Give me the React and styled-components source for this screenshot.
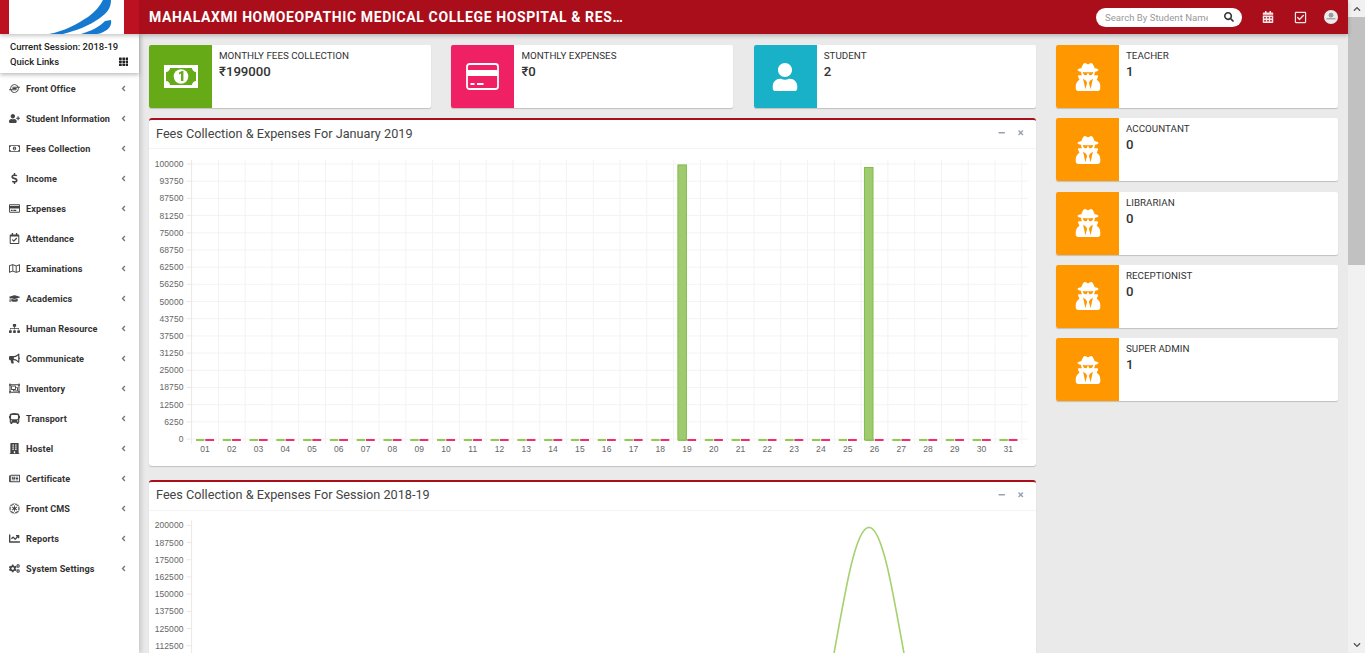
import React from "react"
import styled, { createGlobalStyle } from "styled-components"
import {
  FaAngleLeft,
  FaBuilding,
  FaBullhorn,
  FaBus,
  FaCalendarAlt,
  FaChartLine,
  FaChevronDown,
  FaChevronUp,
  FaCogs,
  FaDollarSign,
  FaEmpire,
  FaGraduationCap,
  FaIoxhost,
  FaMinus,
  FaRegCalendarCheck,
  FaRegCheckSquare,
  FaRegCreditCard,
  FaRegMap,
  FaRegMoneyBillAlt,
  FaRegNewspaper,
  FaRegObjectGroup,
  FaSearch,
  FaSitemap,
  FaTh,
  FaTimes,
  FaUser,
  FaUserPlus,
  FaUserSecret,
} from "react-icons/fa"

const RED = "#a90e1a"

const GlobalStyle = createGlobalStyle`
  html, body {
    margin: 0;
    height: 100%;
    overflow: hidden;
    background: #eaeaea;
    font-family: Roboto, "Noto Sans", Arial, sans-serif;
    color: #333;
  }
  * {
    box-sizing: border-box;
  }
`

const Page = styled.div`
  display: flex;
  width: 100vw;
  height: 100vh;
  overflow: hidden;
`

const Main = styled.div`
  flex: 1;
  min-width: 0;
  display: flex;
  flex-direction: column;
`

const Header = styled.header`
  position: relative;
  z-index: 3;
  display: flex;
  align-items: center;
  flex: none;
  height: 34px;
  background: ${RED};
  box-shadow: 0 2px 4px rgba(0, 0, 0, 0.22);
`

const LogoArea = styled.div`
  flex: none;
  width: 139px;
  height: 34px;
  padding: 0 15px 0 9px;
  background: #bb1121;
`

const LogoBox = styled.div`
  height: 34px;
  background: #fff;
  svg {
    display: block;
  }
`

const Title = styled.div`
  margin-left: 10px;
  white-space: nowrap;
  color: #fff;
  font-size: 14px;
  font-weight: 700;
  letter-spacing: 0.61px;
`

const Tools = styled.div`
  display: flex;
  align-items: center;
  margin-left: auto;
  padding-right: 10px;
`

const SearchPill = styled.div`
  display: flex;
  align-items: center;
  width: 146px;
  height: 19px;
  margin-right: 18px;
  padding: 0 8px 0 9px;
  border-radius: 10px;
  background: #fff;
  color: #333;
  font-size: 10px;
`

const SearchInput = styled.input`
  flex: 1;
  min-width: 0;
  padding: 0;
  border: 0;
  outline: 0;
  background: transparent;
  font-family: inherit;
  font-size: 9.6px;
  &::placeholder {
    color: #999;
    opacity: 1;
  }
`

const SearchGlyph = styled(FaSearch)`
  flex: none;
  margin-left: 16px;
`

const ToolIcon = styled.span`
  display: flex;
  justify-content: center;
  width: 14px;
  margin-left: ${({ gap }) => gap}px;
  color: #f6e6e8;
  font-size: ${({ size }) => size || 12}px;
`

const Body = styled.div`
  flex: 1;
  min-height: 0;
  display: flex;
`

const Sidebar = styled.aside`
  position: relative;
  z-index: 2;
  flex: none;
  width: 139px;
  background: #fff;
  box-shadow: 2px 0 5px rgba(0, 0, 0, 0.16);
`

const SessionBox = styled.div`
  display: flex;
  flex-direction: column;
  height: 39px;
  padding: 5px 11px 0 10px;
  color: #222;
  font-size: 9.5px;
  font-weight: 500;
  line-height: 15px;
  box-shadow: 0 2px 4px rgba(0, 0, 0, 0.25);
`

const QuickRow = styled.div`
  display: flex;
  align-items: center;
  justify-content: space-between;
`

const MenuItem = styled.div`
  display: flex;
  align-items: center;
  height: 30px;
  padding: 1px 0 0 9px;
  color: #333;
  font-size: 9.1px;
  font-weight: 700;
  letter-spacing: 0.1px;
`

const MenuIcon = styled.span`
  display: flex;
  justify-content: center;
  flex: none;
  width: 11px;
  margin-right: 6px;
  color: #444;
  font-size: 11px;
`

const MenuArrow = styled.span`
  display: flex;
  margin-left: auto;
  margin-right: 11px;
  color: #777;
  font-size: 9px;
`

const Content = styled.main`
  flex: 1;
  min-width: 0;
  display: flex;
  gap: 20px;
  padding: 11px 10px 0;
  overflow: hidden;
`

const LeftColumn = styled.div`
  width: 887px;
  flex: none;
`

const RightColumn = styled.div`
  flex: 1;
  display: flex;
  flex-direction: column;
  gap: 10.3px;
`

const CardRow = styled.div`
  display: grid;
  grid-template-columns: repeat(3, 282px);
  gap: 20.4px;
  margin-bottom: 10px;
`

const CardBox = styled.div`
  display: flex;
  height: 63px;
  overflow: hidden;
  border-radius: 2px;
  background: #fff;
  box-shadow: 0 1px 1px rgba(0, 0, 0, 0.18);
`

const CardIcon = styled.div`
  display: flex;
  align-items: center;
  justify-content: center;
  flex: none;
  width: 63px;
  background: ${({ color }) => color};
  color: #fff;
  font-size: 28px;
`

const CardText = styled.div`
  padding: 4px 7px;
`

const CardLabel = styled.div`
  color: #333;
  font-size: 9.8px;
  line-height: 14px;
`

const CardValue = styled.div`
  color: #333;
  font-size: 13.2px;
  font-weight: 500;
  line-height: 17px;
`

const ChartBox = styled.section`
  margin-bottom: 13.6px;
  border-top: 2px solid ${RED};
  border-radius: 3px;
  background: #fff;
  box-shadow: 0 1px 1px rgba(0, 0, 0, 0.18);
`

const ChartHeader = styled.div`
  display: flex;
  align-items: center;
  height: 29px;
  padding: 0 12px 2px 7px;
  border-bottom: 1px solid #f4f4f4;
`

const ChartTitle = styled.h3`
  margin: 0;
  color: #444;
  font-size: 12.7px;
  font-weight: 400;
`

const BoxTool = styled.span`
  display: flex;
  margin-left: ${({ first }) => (first ? "auto" : "11px")};
  color: #97a0b3;
  font-size: 7.5px;
`

const ChartSvg = styled.svg`
  display: block;
  text {
    font-family: "Liberation Sans", Arial, sans-serif;
    font-size: 8.5px;
    letter-spacing: 0.1px;
    fill: #666;
  }
`

const Scrollbar = styled.div`
  display: flex;
  flex-direction: column;
  flex: none;
  width: 17px;
  background: #f1f1f1;
`

const ScrollButton = styled.div`
  display: flex;
  align-items: center;
  justify-content: center;
  flex: none;
  height: 17px;
  color: #505050;
  font-size: 8px;
`

const ScrollThumb = styled.div`
  flex: none;
  height: 248px;
  background: #c1c1c1;
`

const ScrollSpace = styled.div`
  flex: 1;
`

const MENU = [
  ["Front Office", FaIoxhost],
  ["Student Information", FaUserPlus],
  ["Fees Collection", FaRegMoneyBillAlt],
  ["Income", FaDollarSign],
  ["Expenses", FaRegCreditCard],
  ["Attendance", FaRegCalendarCheck],
  ["Examinations", FaRegMap],
  ["Academics", FaGraduationCap],
  ["Human Resource", FaSitemap],
  ["Communicate", FaBullhorn],
  ["Inventory", FaRegObjectGroup],
  ["Transport", FaBus],
  ["Hostel", FaBuilding],
  ["Certificate", FaRegNewspaper],
  ["Front CMS", FaEmpire],
  ["Reports", FaChartLine],
  ["System Settings", FaCogs],
]

const STAFF = [
  ["TEACHER", "1"],
  ["ACCOUNTANT", "0"],
  ["LIBRARIAN", "0"],
  ["RECEPTIONIST", "0"],
  ["SUPER ADMIN", "1"],
]

const AXIS_X = 191.6
const DAY_WIDTH = 26.78
const ROW_HEIGHT = 17.19
const GRID_RIGHT = 1028

const MoneyIcon = () => (
  <svg width="34" height="23" viewBox="0 0 34 23">
    <rect width="34" height="23" fill="#fff" />
    <path
      d="M6 3h22c0 2 2 4 4 4v9c-2 0-4 2-4 4H6c0-2-2-4-4-4V7c2 0 4-2 4-4z"
      fill="#66aa18"
    />
    <circle cx="17" cy="11.5" r="7.3" fill="#fff" />
    <path d="M15 7.5l3-1.5h1.4v10h-2.4V8.6l-2 .9z" fill="#66aa18" />
  </svg>
)

const CardIconSvg = () => (
  <svg width="33" height="27" viewBox="0 0 33 27">
    <rect x="1" y="1" width="31" height="25" rx="2.5" fill="none" stroke="#fff" strokeWidth="1.8" />
    <rect x="1" y="7" width="31" height="6" fill="#fff" />
    <rect x="4.5" y="20" width="4" height="2" fill="#fff" />
    <rect x="11" y="20" width="6.5" height="2" fill="#fff" />
  </svg>
)

const LogoSwoosh = () => (
  <svg width="115" height="34" viewBox="0 0 115 34">
    <path
      d="M40 34C56 31 68 24 79 17C86 12 91 6 94 0H102C102 8 98 13 91 18C80 26 66 31 54 34Z"
      fill="#1479cf"
    />
    <path
      d="M72 34C82 31 90 27 96 21L102 20C103 25 100 29 96 31C93 33 90 34 88 34Z"
      fill="#1479cf"
    />
  </svg>
)

const Avatar = () => (
  <svg width="14" height="14" viewBox="0 0 14 14">
    <circle cx="7" cy="7" r="7" fill="#ececec" />
    <circle cx="7" cy="5.2" r="2.4" fill="#9b9b9b" />
    <rect x="2.5" y="8" width="9" height="1.4" fill="#a9a9a9" />
  </svg>
)

const YAxis = ({ values, top }) =>
  values.map((value, i) => {
    const y = top + i * ROW_HEIGHT
    return (
      <g key={value}>
        <line x1={AXIS_X - 5} x2={AXIS_X} y1={y} y2={y} stroke="#e8e8e8" />
        <text x={AXIS_X - 8} y={y + 3} textAnchor="end">
          {value}
        </text>
      </g>
    )
  })

const monthValues = Array.from({ length: 17 }, (_, i) => 100000 - i * 6250)
const sessionValues = Array.from({ length: 8 }, (_, i) => 200000 - i * 12500)
const days = Array.from({ length: 31 }, (_, i) => String(i + 1).padStart(2, "0"))

const Bar = ({ center, top }) => (
  <g>
    <rect x={center - 9.6} y={top - 0.6} width={9.6} height={440 - top} fill="#c9e3ad" />
    <rect
      x={center - 9}
      y={top}
      width={8.4}
      height={440 - top}
      fill="#9fcb6f"
      stroke="#86bb50"
      strokeWidth="1"
    />
  </g>
)

// both charts are drawn in page coordinates through the viewBox
const MonthChart = () => {
  const right = AXIS_X + 31 * DAY_WIDTH
  return (
    <ChartSvg width="887" height="317" viewBox="149 149 887 317">
      {monthValues.map((value, i) => (
        <line
          key={value}
          x1={AXIS_X}
          x2={GRID_RIGHT}
          y1={164 + i * ROW_HEIGHT}
          y2={164 + i * ROW_HEIGHT}
          stroke="#f3f3f3"
        />
      ))}
      {days.map((day, i) => (
        <line
          key={day}
          x1={AXIS_X + i * DAY_WIDTH}
          x2={AXIS_X + i * DAY_WIDTH}
          y1={160}
          y2={444}
          stroke={i === 0 ? "#e8e8e8" : "#f3f3f3"}
        />
      ))}
      <line x1={right} x2={right} y1={160} y2={444} stroke="#f3f3f3" />
      <YAxis values={monthValues} top={164} />
      {days.map((day, i) => {
        const center = AXIS_X + (i + 0.5) * DAY_WIDTH
        return (
          <g key={day}>
            <rect x={center - 9} y={439} width={8.4} height={2} fill="#8fcb4f" />
            <rect x={center + 0.3} y={439} width={8.8} height={2} fill="#f02c6e" />
            <text x={center} y={452} textAnchor="middle">
              {day}
            </text>
          </g>
        )
      })}
      <Bar center={687} top={165} />
      <Bar center={873.5} top={167.5} />
    </ChartSvg>
  )
}

const SessionChart = () => (
  <ChartSvg width="887" height="400" viewBox="149 510.6 887 400">
    <line x1={AXIS_X} x2={AXIS_X} y1={520} y2={900} stroke="#e8e8e8" />
    <YAxis values={sessionValues} top={525} />
    <path
      d="M824 710C845 590 855 527 869 527C883 527 893 590 914 710"
      fill="none"
      stroke="#a5d16f"
      strokeWidth="1.6"
    />
  </ChartSvg>
)

const Card = ({ color, icon, label, value }) => (
  <CardBox>
    <CardIcon color={color}>{icon}</CardIcon>
    <CardText>
      <CardLabel>{label}</CardLabel>
      <CardValue>{value}</CardValue>
    </CardText>
  </CardBox>
)

const Box = ({ title, children }) => (
  <ChartBox>
    <ChartHeader>
      <ChartTitle>{title}</ChartTitle>
      <BoxTool first>
        <FaMinus />
      </BoxTool>
      <BoxTool>
        <FaTimes />
      </BoxTool>
    </ChartHeader>
    {children}
  </ChartBox>
)

const App = () => (
  <Page>
    <GlobalStyle />
    <Main>
      <Header>
        <LogoArea>
          <LogoBox>
            <LogoSwoosh />
          </LogoBox>
        </LogoArea>
        <Title>MAHALAXMI HOMOEOPATHIC MEDICAL COLLEGE HOSPITAL &amp; RES…</Title>
        <Tools>
          <SearchPill>
            <SearchInput placeholder="Search By Student Name" />
            <SearchGlyph />
          </SearchPill>
          <ToolIcon gap={1}>
            <FaCalendarAlt />
          </ToolIcon>
          <ToolIcon gap={18} size={13}>
            <FaRegCheckSquare />
          </ToolIcon>
          <ToolIcon gap={17}>
            <Avatar />
          </ToolIcon>
        </Tools>
      </Header>
      <Body>
        <Sidebar>
          <SessionBox>
            <span>Current Session: 2018-19</span>
            <QuickRow>
              <span>Quick Links</span>
              <FaTh />
            </QuickRow>
          </SessionBox>
          {MENU.map(([label, Icon]) => (
            <MenuItem key={label}>
              <MenuIcon>
                <Icon />
              </MenuIcon>
              {label}
              <MenuArrow>
                <FaAngleLeft />
              </MenuArrow>
            </MenuItem>
          ))}
        </Sidebar>
        <Content>
          <LeftColumn>
            <CardRow>
              <Card color="#66aa18" icon={<MoneyIcon />} label="MONTHLY FEES COLLECTION" value="₹199000" />
              <Card color="#ef2063" icon={<CardIconSvg />} label="MONTHLY EXPENSES" value="₹0" />
              <Card color="#18b1c8" icon={<FaUser />} label="STUDENT" value="2" />
            </CardRow>
            <Box title="Fees Collection & Expenses For January 2019">
              <MonthChart />
            </Box>
            <Box title="Fees Collection & Expenses For Session 2018-19">
              <SessionChart />
            </Box>
          </LeftColumn>
          <RightColumn>
            {STAFF.map(([label, value]) => (
              <Card key={label} color="#ff9800" icon={<FaUserSecret />} label={label} value={value} />
            ))}
          </RightColumn>
        </Content>
      </Body>
    </Main>
    <Scrollbar>
      <ScrollButton>
        <FaChevronUp />
      </ScrollButton>
      <ScrollThumb />
      <ScrollSpace />
      <ScrollButton>
        <FaChevronDown />
      </ScrollButton>
    </Scrollbar>
  </Page>
)

export default App
